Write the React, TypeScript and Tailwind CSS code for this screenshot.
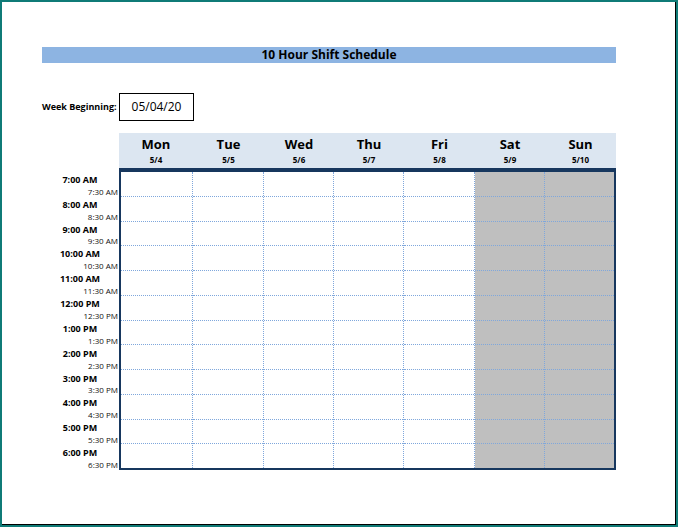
const days = [
  { d: "Mon", n: "5/4", w: "w-[74px]" },
  { d: "Tue", n: "5/5", w: "w-[71px]" },
  { d: "Wed", n: "5/6", w: "w-[70px]" },
  { d: "Thu", n: "5/7", w: "w-[70px]" },
  { d: "Fri", n: "5/8", w: "w-[71px]" },
  { d: "Sat", n: "5/9", w: "w-[70px]" },
  { d: "Sun", n: "5/10", w: "w-[71px]" },
];

const times = [
  ["7:00 AM", "7:30 AM"],
  ["8:00 AM", "8:30 AM"],
  ["9:00 AM", "9:30 AM"],
  ["10:00 AM", "10:30 AM"],
  ["11:00 AM", "11:30 AM"],
  ["12:00 PM", "12:30 PM"],
  ["1:00 PM", "1:30 PM"],
  ["2:00 PM", "2:30 PM"],
  ["3:00 PM", "3:30 PM"],
  ["4:00 PM", "4:30 PM"],
  ["5:00 PM", "5:30 PM"],
  ["6:00 PM", "6:30 PM"],
];

export default function App() {
  return (
    <div
      className="w-[678px] h-[527px] bg-[#0f7b77] p-[2px]"
      style={{ fontFamily: "'Open Sans', 'Liberation Sans', sans-serif" }}
    >
      <div className="w-full h-full bg-white border-r border-b border-black pl-[40px] pt-[45px] text-black">
        {/* Title */}
        <div className="w-[574px] h-[16px] bg-[#8db4e2] flex items-center justify-center text-[12px] font-bold leading-none">
          10 Hour Shift Schedule
        </div>

        {/* Week beginning */}
        <div className="flex items-center mt-[30px] h-[28px]">
          <div className="w-[77px] text-[9px] font-bold">Week Beginning:</div>
          <div className="w-[75px] h-[28px] border border-black flex items-center justify-center text-[12px]">
            05/04/20
          </div>
        </div>

        {/* Schedule */}
        <div className="flex mt-[12px]">
          <div className="w-[77px] flex flex-col">
            <div className="h-[39px]" />
            <div className="h-[298px] flex flex-col">
              {times.map(([a, b]) => (
                <div key={a} className="flex-1 flex flex-col justify-between pr-[1px]">
                  <div className="text-center text-[9px] font-bold leading-none pt-[3px]">{a}</div>
                  <div className="text-right text-[8px] leading-none pb-[1px] text-[#111]">{b}</div>
                </div>
              ))}
            </div>
          </div>
          <div className="flex flex-col">
            <div className="flex h-[35px] bg-[#dce6f1]">
              {days.map((d) => (
                <div key={d.d} className={`${d.w} flex flex-col items-center pt-[3px]`}>
                  <div className="text-[13px] font-bold leading-[16px]">{d.d}</div>
                  <div className="text-[8px] font-bold leading-none mt-[4px]">{d.n}</div>
                </div>
              ))}
            </div>
            <div className="h-[4px] bg-[#17375e]" />
            <div className="flex h-[298px] border-l-2 border-r-2 border-b-2 border-[#17375e] w-[497px]">
              {days.map((d, i) => (
                <div
                  key={d.d}
                  className={`${i === 0 ? "w-[72px]" : i === 6 ? "w-[69px]" : d.w} flex flex-col ${i < 6 ? "border-r border-dotted border-r-[#7fa7dc]" : ""} ${i >= 5 ? "bg-[#bfbfbf]" : "bg-white"}`}
                >
                  {times.map((t, j) => (
                    <div
                      key={t[0]}
                      className={`flex-1 ${j < 11 ? "border-b border-dotted border-b-[#7fa7dc]" : ""}`}
                    />
                  ))}
                </div>
              ))}
            </div>
          </div>
        </div>
      </div>
    </div>
  );
}
